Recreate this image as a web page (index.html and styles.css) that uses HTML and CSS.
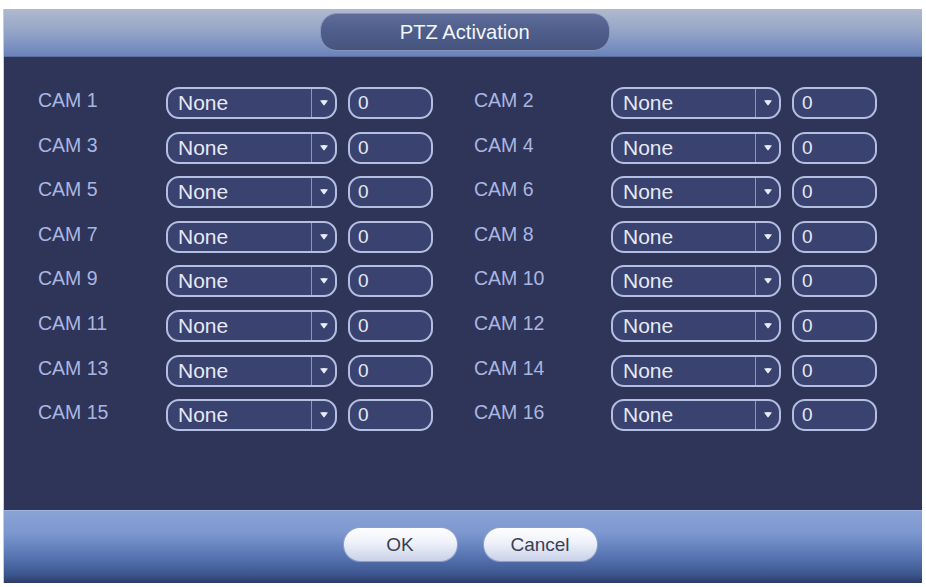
FILE: index.html
```html
<!DOCTYPE html>
<html>
<head>
<meta charset="utf-8">
<link rel="stylesheet" href="styles.css">
</head>
<body>
<div class="dialog">
  <div class="header">
    <div class="title-pill"><span class="title-text">PTZ Activation</span></div>
  </div>
  <div class="content">
    <div class="grid" id="grid"></div>
  </div>
  <div class="footer">
    <button class="btn">OK</button>
    <button class="btn">Cancel</button>
  </div>
</div>
<script>
  var g = document.getElementById('grid');
  var html = '';
  for (var i = 1; i <= 16; i++) {
    html += '<div class="cam-row"><span class="cam-label">CAM ' + i + '</span>' +
      '<div class="select"><span class="select-text">None</span><span class="select-arrow">' +
      '<svg width="10" height="8" viewBox="0 0 10 8"><path d="M1 1.5 Q5 0.5 9 1.5 L5.6 6 Q5 6.8 4.4 6 Z" fill="#e8ecf8"/></svg>' +
      '</span></div><div class="num">0</div></div>';
  }
  g.innerHTML = html;
</script>
</body>
</html>
```
FILE: styles.css
```css
html, body {
  margin: 0;
  padding: 0;
  background: #ffffff;
  font-family: "Liberation Sans", Arial, sans-serif;
}
body {
  width: 926px;
  height: 587px;
  overflow: hidden;
}
.dialog {
  margin: 9px 4px 0 4px;
  width: 918px;
  height: 574px;
  display: flex;
  flex-direction: column;
  background: #2e3558;
  box-shadow: -1px 0 0 #c8ccd8;
}
.header {
  height: 48px;
  display: flex;
  justify-content: center;
  align-items: flex-start;
  background: linear-gradient(to bottom, #b0b9cf 0%, #9aa9c8 40%, #7f94c2 75%, #6a82b8 100%);
  border-bottom: 1px solid #5a6ea0;
  box-sizing: border-box;
}
.title-pill {
  margin-top: 4px;
  margin-left: 4px;
  width: 290px;
  height: 38px;
  box-sizing: border-box;
  border-radius: 17px;
  border: 1px solid #8595bb;
  background: linear-gradient(to bottom, #5d6c98 0%, #4e5d8a 50%, #46557f 100%);
  display: flex;
  align-items: center;
  justify-content: center;
}
.title-text {
  color: #f4f6fb;
  font-size: 21px;
  display: inline-block;
  transform: scaleX(0.96);
  padding-bottom: 1px;
}
.content {
  flex: 1;
  padding: 30px 0 0 34px;
}
.grid {
  display: grid;
  grid-template-columns: 436px 1fr;
  grid-auto-rows: 32px;
  row-gap: 12.6px;
}
.cam-row {
  display: flex;
  align-items: center;
}
.cam-label {
  width: 128px;
  flex: none;
  color: #aab6e2;
  font-size: 19.5px;
  padding-bottom: 5px;
}
.cam-row:nth-child(even) .cam-label {
  width: 137px;
}
.select {
  width: 171px;
  height: 32px;
  box-sizing: border-box;
  border: 2px solid #b4bee0;
  border-radius: 13px;
  background: #3a4270;
  display: flex;
  align-items: center;
  flex: none;
}
.cam-row:nth-child(even) .select {
  width: 170px;
}
.select-text {
  flex: 1;
  padding-left: 10px;
  color: #e6e9f4;
  font-size: 21px;
}
.select-arrow {
  width: 23px;
  height: 100%;
  border-left: 1px solid #8a96c0;
  display: flex;
  align-items: center;
  justify-content: center;
}
.num {
  margin-left: 11px;
  width: 85px;
  height: 32px;
  box-sizing: border-box;
  border: 2px solid #b4bee0;
  border-radius: 13px;
  background: #3a4270;
  color: #e6e9f4;
  font-size: 19px;
  display: flex;
  align-items: center;
  padding-left: 8px;
  flex: none;
}
.footer {
  height: 73px;
  display: flex;
  justify-content: center;
  align-items: flex-start;
  gap: 27px;
  padding-top: 17px;
  padding-left: 14px;
  box-sizing: border-box;
  background: linear-gradient(to bottom, #8aa3d6 0%, #7d98d0 30%, #5b78b6 60%, #3d5690 88%, #2b3a66 100%);
  border-top: 1px solid #9fb4e0;
}
.btn {
  width: 113px;
  height: 33px;
  border: none;
  border-radius: 16px;
  background: linear-gradient(to bottom, #ffffff 0%, #eef1fa 45%, #c9d1e8 100%);
  box-shadow: 0 0 0 1px #8fa0c8;
  color: #3a3f55;
  font-family: "Liberation Sans", Arial, sans-serif;
  font-size: 19px;
  padding: 0;
}
```
